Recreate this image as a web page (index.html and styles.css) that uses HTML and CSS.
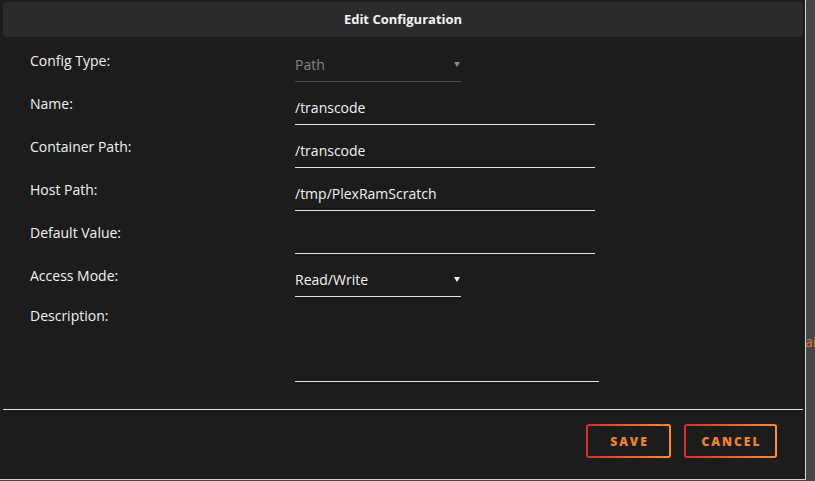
FILE: index.html
```html
<!DOCTYPE html>
<html>
<head>
<meta charset="utf-8">
<link rel="stylesheet" href="styles.css">
</head>
<body>
<div class="page">
  <div class="dialog">
    <div class="header">Edit Configuration</div>
    <div class="form">
      <div class="row">
        <div class="label">Config Type:</div>
        <div class="field select short disabled"><span>Path</span><svg class="caret" width="6" height="6" viewBox="0 0 6 6"><path d="M0 1h6L3 6z"/></svg></div>
      </div>
      <div class="row">
        <div class="label">Name:</div>
        <div class="field wide">/transcode</div>
      </div>
      <div class="row">
        <div class="label">Container Path:</div>
        <div class="field wide">/transcode</div>
      </div>
      <div class="row">
        <div class="label">Host Path:</div>
        <div class="field wide">/tmp/PlexRamScratch</div>
      </div>
      <div class="row">
        <div class="label">Default Value:</div>
        <div class="field wide"></div>
      </div>
      <div class="row">
        <div class="label">Access Mode:</div>
        <div class="field select short"><span>Read/Write</span><svg class="caret" width="6" height="6" viewBox="0 0 6 6"><path d="M0 1h6L3 6z"/></svg></div>
      </div>
      <div class="row desc">
        <div class="label">Description:</div>
        <div class="field area"></div>
      </div>
    </div>
    <div class="divider"></div>
    <div class="actions">
      <button class="btn save">SAVE</button>
      <button class="btn cancel">CANCEL</button>
    </div>
  </div>
  <div class="backdrop"><span class="peek">ai</span></div>
</div>
</body>
</html>
```
FILE: styles.css
```css
* { box-sizing: border-box; }
html, body { margin: 0; padding: 0; }
body {
  background: #474747;
  font-family: "Open Sans", "Noto Sans", sans-serif;
  color: #f2f2f2;
  width: 815px;
  height: 481px;
  overflow: hidden;
}
.page {
  display: flex;
  align-items: flex-start;
}
.dialog {
  width: 806px;
  height: 480px;
  background: #1c1c1c;
  border-right: 1px solid #d6d6d6;
  border-bottom: 1px solid #d6d6d6;
  display: flex;
  flex-direction: column;
}
.header {
  margin: 2px 2px 0 3px;
  height: 35px;
  background: #2b2b2b;
  border-radius: 4px;
  font-weight: 700;
  font-size: 13px;
  line-height: 35px;
  text-align: center;
  color: #f4f4f4;
}
.form {
  padding: 13px 0 0 30px;
  display: flex;
  flex-direction: column;
}
.row {
  display: grid;
  grid-template-columns: 265px auto;
  height: 43px;
  align-items: start;
}
.row.desc { height: 75px; }
.label {
  font-size: 14px;
  line-height: 20px;
  padding-top: 1px;
}
.row.desc .label { padding-top: 0; margin-top: -2px; }
.field {
  padding-top: 5px;
  padding-bottom: 6px;
  font-size: 14px;
  line-height: 20px;
  height: 32px;
  border-bottom: 1px solid #e4e4e4;
  color: #f2f2f2;
}
.field.wide { width: 300px; }
.field.short { width: 166px; }
.field.area { width: 304px; height: 74px; }
.select {
  display: flex;
  justify-content: space-between;
  align-items: center;
  padding-right: 1px;
}
.select .caret { fill: #f2f2f2; margin-top: -2px; }
.select.disabled { color: #858585; border-bottom-color: #4d4d4d; }
.select.disabled .caret { fill: #8a8a8a; }
.divider {
  margin: 26px 2px 0 3px;
  height: 1px;
  background: #e4e4e4;
}
.actions {
  display: flex;
  justify-content: flex-end;
  gap: 13px;
  padding: 14px 28px 0 0;
}
.btn {
  height: 34px;
  border: 2px solid transparent;
  border-radius: 3px;
  background:
    linear-gradient(#1c1c1c, #1c1c1c) padding-box,
    linear-gradient(90deg, #e22a28, #ff8c2e) border-box;
  color: #f0822c;
  font-family: "Open Sans", "Noto Sans", sans-serif;
  font-weight: 800;
  font-size: 12px;
  letter-spacing: 2px;
  padding: 0 0 0 2px;
  cursor: pointer;
}
.btn.save { width: 85px; }
.btn.cancel { width: 93px; }
.backdrop {
  flex: 1;
  height: 481px;
  overflow: hidden;
  padding-top: 335px;
}
.peek {
  display: block;
  color: #e07a2c;
  font-size: 14px;
  line-height: 14px;
  margin-left: -1px;
}
```
